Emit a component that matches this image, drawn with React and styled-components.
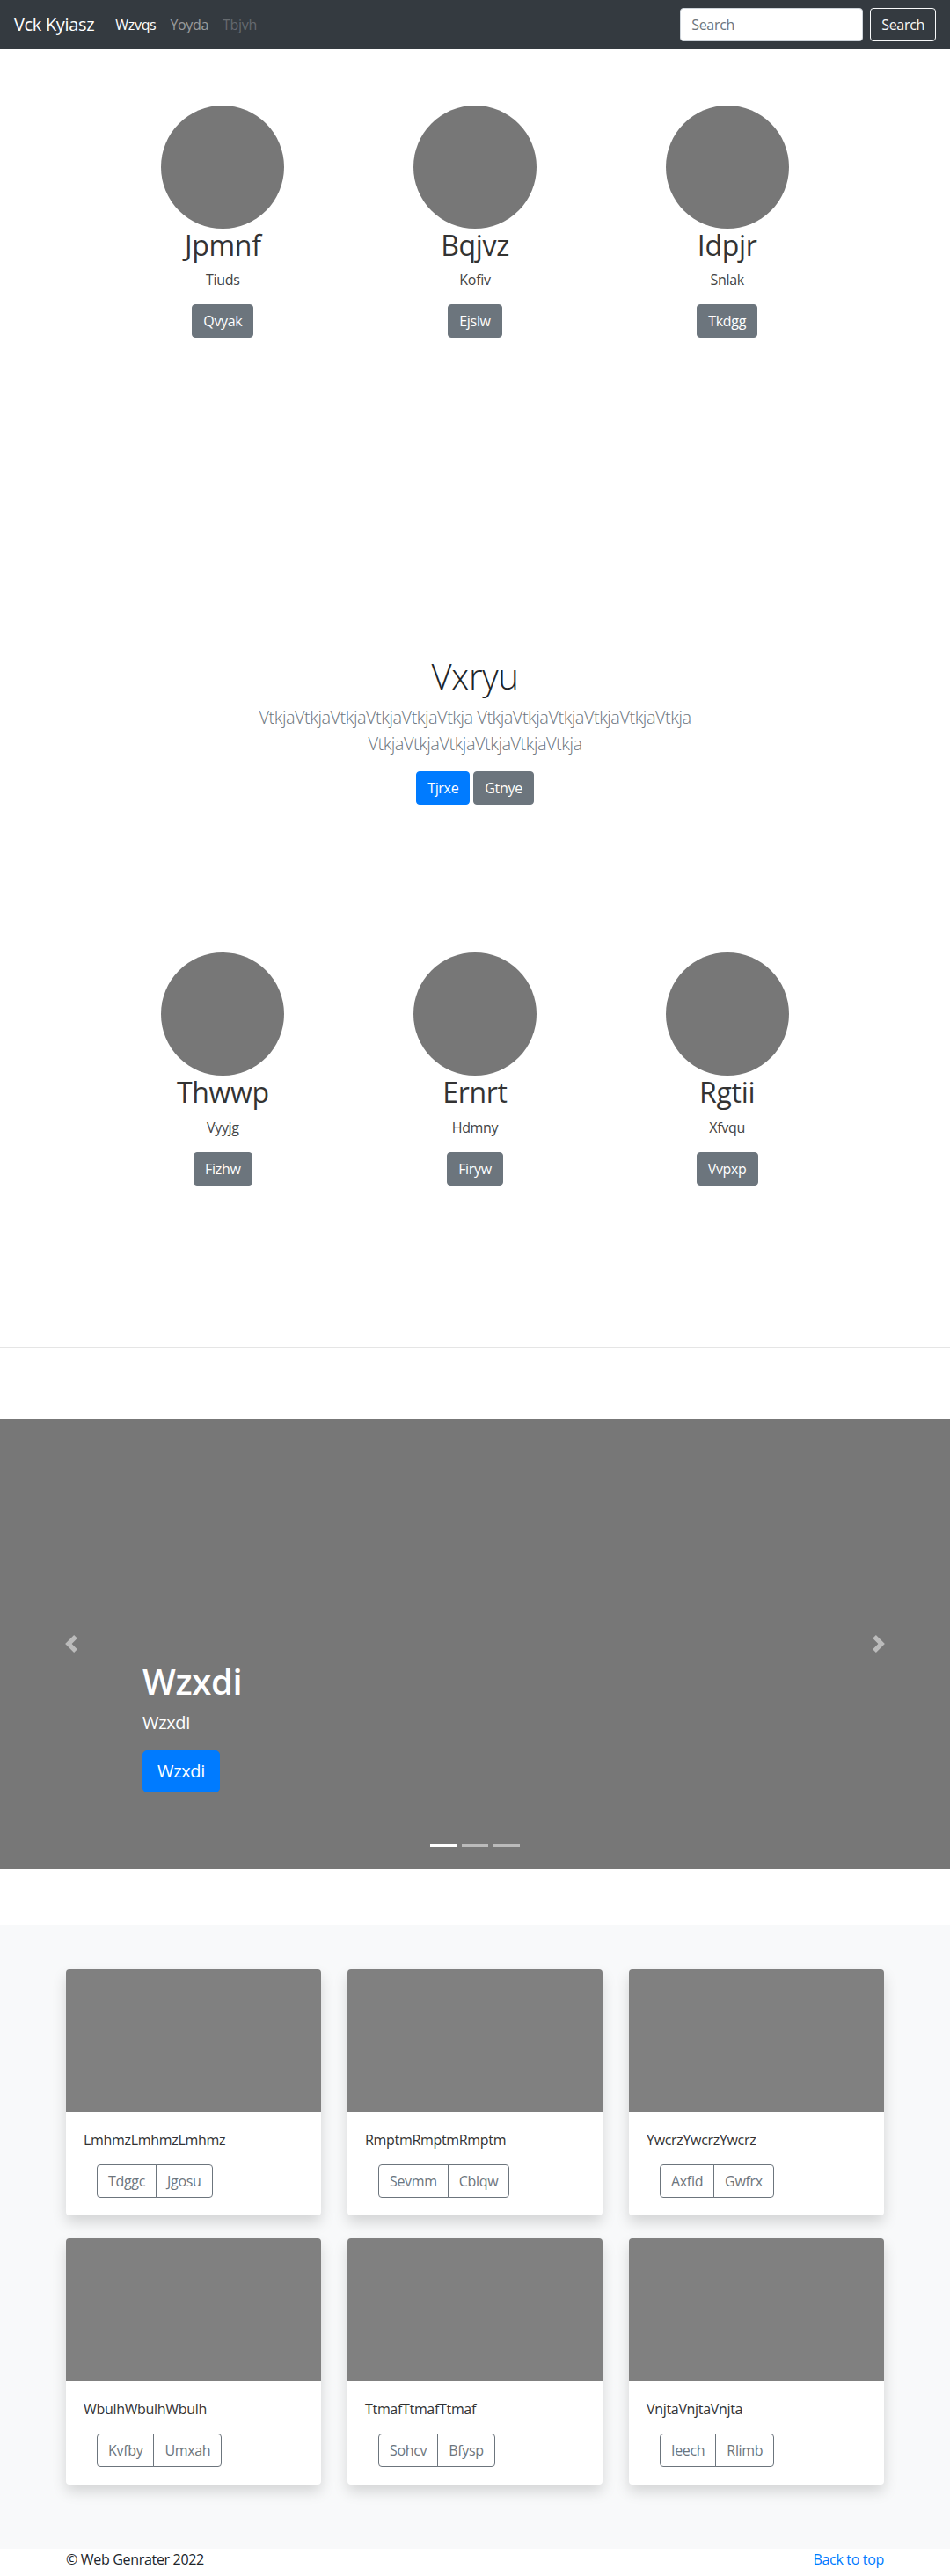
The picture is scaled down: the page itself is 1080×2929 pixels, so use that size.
import React from "react";
import styled, { createGlobalStyle } from "styled-components";

const GlobalStyle = createGlobalStyle`
  html, body { margin: 0; padding: 0; background: #fff; }
  body {
    font-family: "Open Sans", "Noto Sans", "Liberation Sans", sans-serif;
    font-size: 16px;
    line-height: 1.5;
    color: #212529;
    letter-spacing: -0.02em;
  }
  * { box-sizing: border-box; }
`;

/* ---------- Navbar ---------- */
const Navbar = styled.nav`
  height: 56px;
  background: #343a40;
  display: flex;
  align-items: center;
  padding: 0 16px;
`;
const Brand = styled.a`
  font-size: 20px;
  line-height: 1.5;
  color: #fff;
  margin-right: 16px;
  text-decoration: none;
`;
const NavLinks = styled.div`
  display: flex;
  flex: 1;
`;
const NavLink = styled.a`
  padding: 0 8px;
  font-size: 16px;
  text-decoration: none;
  color: ${(p) =>
    p.$state === "active"
      ? "#fff"
      : p.$state === "disabled"
      ? "rgba(255,255,255,0.25)"
      : "rgba(255,255,255,0.5)"};
`;
const SearchForm = styled.form`
  display: flex;
  align-items: center;
  margin: 0;
`;
const SearchInput = styled.input`
  width: 208px;
  height: 38px;
  padding: 6px 12px;
  font: inherit;
  font-size: 16px;
  letter-spacing: -0.02em;
  color: #495057;
  background: #fff;
  border: 1px solid #ced4da;
  border-radius: 4px;
  margin-right: 8px;
  &::placeholder { color: #6c757d; }
`;
const OutlineLightButton = styled.button`
  height: 38px;
  padding: 6px 12px;
  font: inherit;
  font-size: 16px;
  line-height: 1.5;
  letter-spacing: -0.02em;
  color: #f8f9fa;
  background: transparent;
  border: 1px solid #f8f9fa;
  border-radius: 4px;
`;

/* ---------- Shared buttons ---------- */
const Btn = styled.a`
  display: inline-flex;
  align-items: center;
  justify-content: center;
  height: ${(p) => (p.$lg ? "48px" : "38px")};
  padding: ${(p) => (p.$lg ? "8px 16px" : "6px 12px")};
  font-size: ${(p) => (p.$lg ? "20px" : "16px")};
  line-height: 1.5;
  border-radius: ${(p) => (p.$lg ? "5px" : "4px")};
  color: #fff;
  text-decoration: none;
  background: ${(p) => (p.$variant === "primary" ? "#007bff" : "#6c757d")};
  border: 1px solid ${(p) => (p.$variant === "primary" ? "#007bff" : "#6c757d")};
`;

/* ---------- Featurettes ---------- */
const FeatureSection = styled.section`
  padding-top: ${(p) => p.$top || 0}px;
`;
const FeatureRow = styled.div`
  width: 860px;
  margin: 0 auto;
  display: grid;
  grid-template-columns: repeat(3, 1fr);
`;
const FeatureCol = styled.div`
  display: flex;
  flex-direction: column;
  align-items: center;
  text-align: center;
`;
const Circle = styled.div`
  width: 140px;
  height: 140px;
  border-radius: 50%;
  background: #777;
`;
const FeatureTitle = styled.h2`
  margin: 0 0 8px;
  font-size: 32px;
  line-height: 1.2;
  font-weight: 400;
  color: #333;
`;
const FeatureText = styled.p`
  margin: 0 0 16px;
  font-size: 16px;
  line-height: 1.5;
  color: #444;
`;
const Divider = styled.hr`
  margin: 184px 0 0;
  border: 0;
  border-top: 1px solid rgba(0, 0, 0, 0.1);
  height: 0;
`;

/* ---------- Jumbotron ---------- */
const Jumbotron = styled.section`
  padding-top: 176px;
  padding-bottom: 168px;
  text-align: center;
`;
const JumboContainer = styled.div`
  max-width: 640px;
  margin: 0 auto;
  padding: 0 15px;
`;
const JumboTitle = styled.h1`
  margin: 0 0 8px;
  font-size: 40px;
  line-height: 1.2;
  font-weight: 300;
  color: #212529;
`;
const Lead = styled.p`
  margin: 0 0 16px;
  font-size: 20px;
  line-height: 1.5;
  font-weight: 300;
  letter-spacing: -0.025em;
  color: #6c757d;
`;
const ButtonRow = styled.div`
  display: flex;
  justify-content: center;
  gap: 4px;
  margin-top: 8px;
`;

/* ---------- Carousel ---------- */
const Carousel = styled.div`
  position: relative;
  height: 512px;
  margin-top: 80px;
  margin-bottom: 64px;
  background: #777;
`;
const Control = styled.a`
  position: absolute;
  top: 0;
  bottom: 0;
  ${(p) => (p.$side === "prev" ? "left: 0;" : "right: 0;")}
  width: 15%;
  display: flex;
  align-items: center;
  justify-content: center;
  opacity: 0.5;
`;
const Caption = styled.div`
  position: absolute;
  left: 15%;
  right: 15%;
  bottom: 67px;
  padding: 20px 0;
  color: #fff;
  text-align: left;
`;
const CaptionTitle = styled.h1`
  margin: 0 0 8px;
  font-size: 40px;
  line-height: 1.2;
  font-weight: 600;
  color: #fff;
`;
const CaptionText = styled.p`
  margin: 0 0 16px;
  font-size: 20px;
  line-height: 1.5;
`;
const Indicators = styled.ol`
  position: absolute;
  left: 0;
  right: 0;
  bottom: 25px;
  margin: 0;
  padding: 0;
  list-style: none;
  display: flex;
  justify-content: center;
  gap: 6px;
`;
const Indicator = styled.li`
  width: 30px;
  height: 3px;
  background: ${(p) => (p.$active ? "#fff" : "rgba(255,255,255,0.5)")};
`;

/* ---------- Album ---------- */
const Album = styled.section`
  background: #f8f9fa;
  padding: 50px 0 73px;
`;
const Container = styled.div`
  width: 960px;
  margin: 0 auto;
  padding: 0 15px;
`;
const CardGrid = styled.div`
  display: grid;
  grid-template-columns: repeat(3, 1fr);
  column-gap: 30px;
  row-gap: 26px;
`;
const Card = styled.div`
  background: #fff;
  border-radius: 4px;
  box-shadow: 0 8px 16px rgba(0, 0, 0, 0.15);
  overflow: hidden;
`;
const CardImage = styled.div`
  height: 162px;
  background: #808080;
`;
const CardBody = styled.div`
  padding: 20px;
`;
const CardText = styled.p`
  margin: 0 0 16px;
  font-size: 16px;
  line-height: 1.5;
  color: #333;
`;
const BtnGroup = styled.div`
  display: flex;
  margin-left: 15px;
`;
const OutlineBtn = styled.button`
  height: 38px;
  padding: 6px 12px;
  font: inherit;
  font-size: 16px;
  line-height: 1.5;
  letter-spacing: -0.02em;
  color: #6c757d;
  background: transparent;
  border: 1px solid #6c757d;
  border-radius: ${(p) => (p.$first ? "4px 0 0 4px" : "0 4px 4px 0")};
  margin-left: ${(p) => (p.$first ? "0" : "-1px")};
`;

/* ---------- Footer ---------- */
const Footer = styled.footer`
  width: 960px;
  margin: 0 auto;
  padding: 0 15px;
  height: 24px;
  display: flex;
  justify-content: space-between;
  font-size: 16px;
  line-height: 1.5;
`;
const FooterLink = styled.a`
  color: #007bff;
  text-decoration: none;
`;

const Chevron = ({ dir }) => (
  <svg width="20" height="20" viewBox="0 0 8 8" fill="#fff">
    {dir === "prev" ? (
      <path d="M5.25 0l-4 4 4 4 1.5-1.5L4.25 4l2.5-2.5L5.25 0z" />
    ) : (
      <path d="M2.75 0l-1.5 1.5L3.75 4l-2.5 2.5L2.75 8l4-4-4-4z" />
    )}
  </svg>
);

const row1 = [
  ["Jpmnf", "Tiuds", "Qvyak"],
  ["Bqjvz", "Kofiv", "Ejslw"],
  ["Idpjr", "Snlak", "Tkdgg"],
];
const row2 = [
  ["Thwwp", "Vyyjg", "Fizhw"],
  ["Ernrt", "Hdmny", "Firyw"],
  ["Rgtii", "Xfvqu", "Vvpxp"],
];
const cards = [
  ["LmhmzLmhmzLmhmz", "Tdggc", "Jgosu"],
  ["RmptmRmptmRmptm", "Sevmm", "Cblqw"],
  ["YwcrzYwcrzYwcrz", "Axfid", "Gwfrx"],
  ["WbulhWbulhWbulh", "Kvfby", "Umxah"],
  ["TtmafTtmafTtmaf", "Sohcv", "Bfysp"],
  ["VnjtaVnjtaVnjta", "Ieech", "Rlimb"],
];

const Features = ({ items, top }) => (
  <FeatureSection $top={top}>
    <FeatureRow>
      {items.map(([t, s, b]) => (
        <FeatureCol key={t}>
          <Circle />
          <FeatureTitle>{t}</FeatureTitle>
          <FeatureText>{s}</FeatureText>
          <Btn $variant="secondary">{b}</Btn>
        </FeatureCol>
      ))}
    </FeatureRow>
  </FeatureSection>
);

export default function App() {
  return (
    <>
      <GlobalStyle />
      <Navbar>
        <Brand href="#">Vck Kyiasz</Brand>
        <NavLinks>
          <NavLink $state="active">Wzvqs</NavLink>
          <NavLink>Yoyda</NavLink>
          <NavLink $state="disabled">Tbjvh</NavLink>
        </NavLinks>
        <SearchForm onSubmit={(e) => e.preventDefault()}>
          <SearchInput placeholder="Search" />
          <OutlineLightButton type="button">Search</OutlineLightButton>
        </SearchForm>
      </Navbar>

      <Features items={row1} top={64} />
      <Divider />

      <Jumbotron>
        <JumboContainer>
          <JumboTitle>Vxryu</JumboTitle>
          <Lead>
            VtkjaVtkjaVtkjaVtkjaVtkjaVtkja VtkjaVtkjaVtkjaVtkjaVtkjaVtkja
            VtkjaVtkjaVtkjaVtkjaVtkjaVtkja
          </Lead>
          <ButtonRow>
            <Btn $variant="primary">Tjrxe</Btn>
            <Btn $variant="secondary">Gtnye</Btn>
          </ButtonRow>
        </JumboContainer>
      </Jumbotron>

      <Features items={row2} top={0} />
      <Divider />

      <Carousel>
        <Control $side="prev">
          <Chevron dir="prev" />
        </Control>
        <Control $side="next">
          <Chevron dir="next" />
        </Control>
        <Caption>
          <CaptionTitle>Wzxdi</CaptionTitle>
          <CaptionText>Wzxdi</CaptionText>
          <Btn $variant="primary" $lg>
            Wzxdi
          </Btn>
        </Caption>
        <Indicators>
          <Indicator $active />
          <Indicator />
          <Indicator />
        </Indicators>
      </Carousel>

      <Album>
        <Container>
          <CardGrid>
            {cards.map(([t, a, b]) => (
              <Card key={t}>
                <CardImage />
                <CardBody>
                  <CardText>{t}</CardText>
                  <BtnGroup>
                    <OutlineBtn $first>{a}</OutlineBtn>
                    <OutlineBtn>{b}</OutlineBtn>
                  </BtnGroup>
                </CardBody>
              </Card>
            ))}
          </CardGrid>
        </Container>
      </Album>

      <Footer>
        <span>© Web Genrater 2022</span>
        <FooterLink href="#">Back to top</FooterLink>
      </Footer>
    </>
  );
}
